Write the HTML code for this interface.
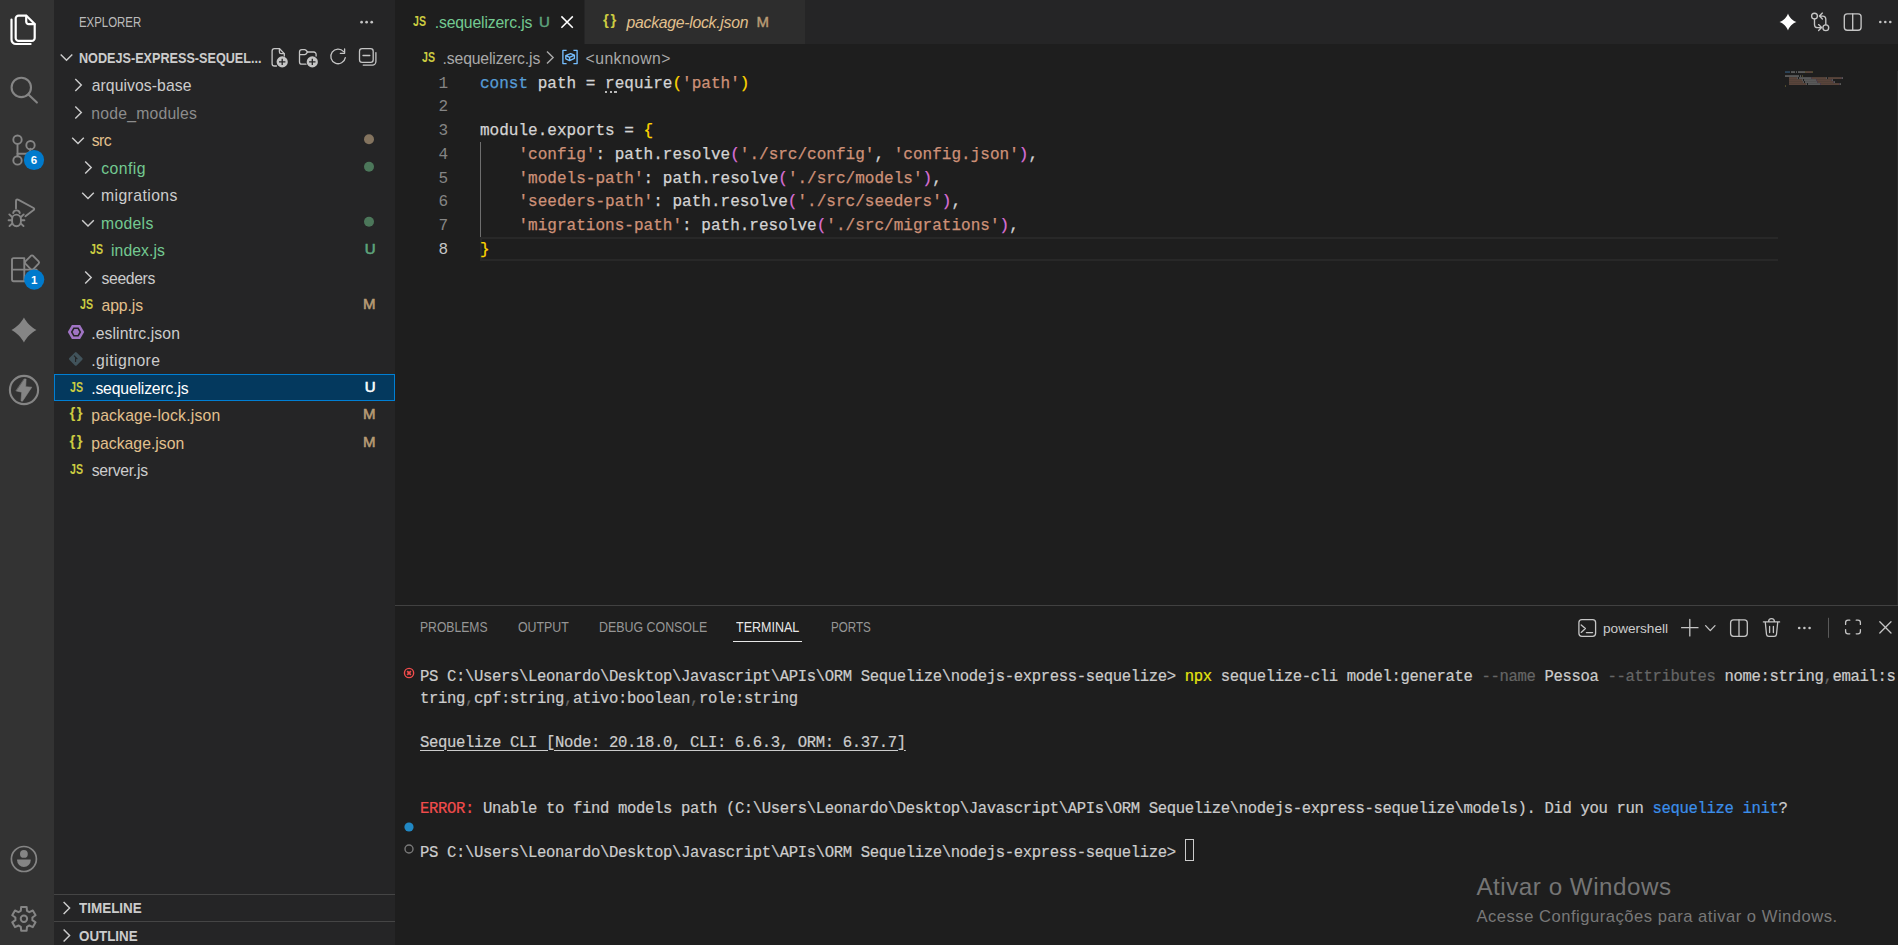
<!DOCTYPE html>
<html lang="pt-BR">
<head>
<meta charset="utf-8">
<title>.sequelizerc.js - nodejs-express-sequelize - Visual Studio Code</title>
<style>
*{box-sizing:border-box;margin:0;padding:0}
html,body{width:1898px;height:945px;overflow:hidden;background:#1e1e1e}
body{position:relative;font-family:"Liberation Sans",sans-serif;color:#cccccc;font-size:15.75px}
.abs{position:absolute}
.t{position:absolute;white-space:pre;line-height:1}
svg{position:absolute;overflow:visible}
/* regions */
#activity{left:0;top:0;width:54px;height:945px;background:#333333}
#sidebar{left:54px;top:0;width:341px;height:945px;background:#252526}
#tabs{left:395px;top:0;width:1503px;height:44px;background:#252526}
#editor{left:395px;top:44px;width:1503px;height:561px;background:#1e1e1e}
#panel{left:395px;top:605px;width:1503px;height:340px;background:#1e1e1e;border-top:1px solid #414141}
/* sidebar tree */
.row{position:absolute;left:54px;width:341px;height:27.5px}
.lbl{position:absolute;white-space:pre;line-height:1;font-size:15.75px}
.mono{font-family:"Liberation Mono",monospace}
.code{-webkit-text-stroke:0.25px currentColor;position:absolute;left:480px;white-space:pre;font-family:"Liberation Mono",monospace;font-size:16.04px;line-height:23.75px;height:23.75px;color:#d4d4d4}
.ln{position:absolute;left:395px;width:53px;text-align:right;font-family:"Liberation Mono",monospace;font-size:16.04px;line-height:23.75px;height:23.75px;color:#858585}
.term{-webkit-text-stroke:0.2px currentColor;position:absolute;left:420px;white-space:pre;font-family:"Liberation Mono",monospace;font-size:15px;line-height:22px;height:22px;color:#cccccc}
.k{color:#569cd6}.s{color:#ce9178}.b1{color:#ffd700}.b2{color:#da70d6}
</style>
</head>
<body>
<div id="activity" class="abs"></div>
<div id="sidebar" class="abs"></div>
<div id="tabs" class="abs"></div>
<div id="editor" class="abs"></div>
<div id="panel" class="abs"></div>
<!--ACTIVITY-->
<svg class="abs" style="left:0;top:0" width="54" height="945" viewBox="0 0 54 945" fill="none" stroke-linecap="round" stroke-linejoin="round">
<g stroke="#ffffff" stroke-width="2.2">
<path d="M18.6 15.7 H26.4 L34.7 24 V37.9 a2.9 2.9 0 0 1 -2.9 2.9 H18.6 a2.9 2.9 0 0 1 -2.9 -2.9 V18.6 a2.9 2.9 0 0 1 2.9 -2.9 Z"/>
<path d="M26.2 15.9 V21.6 a2.6 2.6 0 0 0 2.6 2.6 H34.5"/>
<path d="M11.5 19.6 V39.6 a4.4 4.4 0 0 0 4.4 4.4 H30.6"/>
</g>
<g stroke="#858585" stroke-width="2.1">
<circle cx="21.3" cy="87.4" r="9.7"/><path d="M28.4 94.5 L36.9 102.6"/>
</g>
<g stroke="#858585" stroke-width="1.9">
<circle cx="17.5" cy="139.7" r="4.2"/><circle cx="17.5" cy="160.4" r="4.2"/><circle cx="30.5" cy="145.2" r="4.2"/>
<path d="M17.5 144 V156.2"/><path d="M17.5 153.7 H25.5 a5 5 0 0 0 5 -5 V149.4"/>
</g>
<circle cx="34" cy="160" r="10.1" fill="#007acc" stroke="none"/>
<g stroke="#858585" stroke-width="1.9">
<path d="M16 208.5 V200.9 a1.4 1.4 0 0 1 2.1 -1.2 L33.6 208 a1.2 1.2 0 0 1 0 2.1 L25.4 216.2"/>
<path d="M12.1 219 a4.4 4.4 0 0 1 8.8 0 V221.8 a4.4 4.4 0 0 1 -8.8 0 Z"/>
<path d="M13.2 213 a3.4 3.4 0 0 1 6.6 0"/>
<path d="M12.1 217 L9.3 214.4 M12.1 220.3 H8.6 M12.4 223.4 L9.5 226 M20.9 217 L23.7 214.4 M20.9 220.3 H24.4 M20.6 223.4 L23.5 226"/>
</g>
<g stroke="#858585" stroke-width="1.9">
<path d="M12 259.7 a1.6 1.6 0 0 1 1.6 -1.6 H24.3 V281.2 H13.6 a1.6 1.6 0 0 1 -1.6 -1.6 Z M12 269.6 H36.6 V279.6 a1.6 1.6 0 0 1 -1.6 1.6 H24.3"/>
<path d="M32 255.4 a1.5 1.5 0 0 1 1.1 0.4 L38.6 261.4 a1.7 1.7 0 0 1 0 2.3 L33.1 269.3 a1.5 1.5 0 0 1 -2.2 0 L25.4 263.7 a1.7 1.7 0 0 1 0 -2.3 L30.9 255.8 a1.5 1.5 0 0 1 1.1 -0.4 Z"/>
</g>
<circle cx="34.2" cy="279.6" r="10.1" fill="#007acc" stroke="none"/>
<path d="M23.95 317.6 C26.15 322.20000000000005 31.85 327.90000000000003 36.45 330.1 C31.85 332.3 26.15 338.0 23.95 342.6 C21.75 338.0 16.049999999999997 332.3 11.45 330.1 C16.049999999999997 327.90000000000003 21.75 322.20000000000005 23.95 317.6 Z" fill="#858585" stroke="none"/>
<circle cx="24" cy="390" r="14.1" stroke="#858585" stroke-width="2.1"/>
<path d="M24.4 379 H26.1 L25.7 386.7 L31.8 387.2 L22.5 401.2 L21 400.9 L21.7 392.2 L16.3 390.9 Z" fill="#858585" stroke="#858585" stroke-width="0.6"/>
<circle cx="23.9" cy="859" r="12.5" stroke="#858585" stroke-width="1.7"/>
<circle cx="23.9" cy="853.9" r="3.9" fill="#858585" stroke="none"/>
<path d="M17.1 859.4 H30.7 V860.3 a6.8 6.8 0 0 1 -13.6 0 Z" fill="#858585" stroke="none"/>
<path d="M20.82 910.77 L21.16 906.91 L26.64 906.91 L26.98 910.77 L29.31 912.12 L32.82 910.48 L35.57 915.23 L32.39 917.45 L32.39 920.15 L35.57 922.37 L32.82 927.12 L29.31 925.48 L26.98 926.83 L26.64 930.69 L21.16 930.69 L20.82 926.83 L18.49 925.48 L14.98 927.12 L12.23 922.37 L15.41 920.15 L15.41 917.45 L12.23 915.23 L14.98 910.48 L18.49 912.12 Z" stroke="#858585" stroke-width="2"/>
<circle cx="23.9" cy="918.8" r="3.2" stroke="#858585" stroke-width="2"/>
</svg>
<div class="t" style="left:24px;top:155px;width:20px;text-align:center;font-size:11.5px;font-weight:bold;color:#fff">6</div>
<div class="t" style="left:24.2px;top:274.5px;width:20px;text-align:center;font-size:11.5px;font-weight:bold;color:#fff">1</div>
<!--/ACTIVITY-->
<!--SIDEBAR-->
<div class="t" id="sb_title" style="left:79.00px;top:16.03px;font-size:13.9px;color:#bbbbbb;transform:scaleX(0.8222);transform-origin:0 0;">EXPLORER</div>
<div class="t" id="sb_head" style="left:79.20px;top:50.78px;font-size:14.2px;color:#cccccc;transform:scaleX(0.8904);transform-origin:0 0;font-weight:bold;">NODEJS-EXPRESS-SEQUEL...</div>
<div class="abs" style="left:54px;top:374px;width:341px;height:27px;background:#04395e;border:1px solid #007fd4"></div>
<div class="t" id="lbl0" style="left:91.70px;top:78.17px;font-size:15.75px;color:#cccccc;letter-spacing:0.067px;">arquivos-base</div>
<div class="t" id="lbl1" style="left:91.30px;top:105.67px;font-size:15.75px;color:#8c8c8c;letter-spacing:0.209px;">node_modules</div>
<div class="t" id="lbl2" style="left:91.80px;top:133.17px;font-size:15.75px;color:#e2c08d;letter-spacing:-0.6px;">src</div>
<div class="t" id="lbl3" style="left:101.30px;top:160.67px;font-size:15.75px;color:#73c991;letter-spacing:0.42px;">config</div>
<div class="t" id="lbl4" style="left:101.00px;top:188.17px;font-size:15.75px;color:#cccccc;letter-spacing:0.411px;">migrations</div>
<div class="t" id="lbl5" style="left:101.00px;top:215.67px;font-size:15.75px;color:#73c991;letter-spacing:0.3px;">models</div>
<div class="t ic" style="left:89.8px;top:242.18px;font-size:14.2px;font-weight:bold;color:#cbcb41;transform:scaleX(.75);transform-origin:0 0">JS</div>
<div class="t" id="lbl6" style="left:111.00px;top:243.17px;font-size:15.75px;color:#73c991;letter-spacing:0.071px;">index.js</div>
<div class="t" style="left:345px;width:30.6px;text-align:right;top:241.30px;font-size:15px;color:#5fa57d;-webkit-text-stroke:0.6px #5fa57d">U</div>
<div class="t" id="lbl7" style="left:101.50px;top:270.67px;font-size:15.75px;color:#cccccc;letter-spacing:-0.367px;">seeders</div>
<div class="t ic" style="left:79.8px;top:297.18px;font-size:14.2px;font-weight:bold;color:#cbcb41;transform:scaleX(.75);transform-origin:0 0">JS</div>
<div class="t" id="lbl8" style="left:101.50px;top:298.17px;font-size:15.75px;color:#e2c08d;letter-spacing:-0.1px;">app.js</div>
<div class="t" style="left:345px;width:30.6px;text-align:right;top:296.30px;font-size:15px;color:#b89b74;-webkit-text-stroke:0.6px #b89b74">M</div>
<div class="t" id="lbl9" style="left:91.20px;top:325.67px;font-size:15.75px;color:#cccccc;letter-spacing:0.092px;">.eslintrc.json</div>
<div class="t" id="lbl10" style="left:91.20px;top:353.17px;font-size:15.75px;color:#cccccc;letter-spacing:0.456px;">.gitignore</div>
<div class="t ic" style="left:69.9px;top:379.68px;font-size:14.2px;font-weight:bold;color:#cbcb41;transform:scaleX(.75);transform-origin:0 0">JS</div>
<div class="t" id="lbl11" style="left:91.20px;top:380.67px;font-size:15.75px;color:#ffffff;letter-spacing:-0.164px;">.sequelizerc.js</div>
<div class="t" style="left:345px;width:30.6px;text-align:right;top:378.80px;font-size:15px;color:#ffffff;-webkit-text-stroke:0.6px #ffffff">U</div>
<div class="t ic" style="left:69.4px;top:405.10px;font-size:15px;font-weight:bold;color:#cbcb41;letter-spacing:1.6px">{}</div>
<div class="t" id="lbl12" style="left:91.20px;top:408.17px;font-size:15.75px;color:#e2c08d;letter-spacing:0.181px;">package-lock.json</div>
<div class="t" style="left:345px;width:30.6px;text-align:right;top:406.30px;font-size:15px;color:#b89b74;-webkit-text-stroke:0.6px #b89b74">M</div>
<div class="t ic" style="left:69.4px;top:432.60px;font-size:15px;font-weight:bold;color:#cbcb41;letter-spacing:1.6px">{}</div>
<div class="t" id="lbl13" style="left:91.20px;top:435.67px;font-size:15.75px;color:#e2c08d;letter-spacing:0.027px;">package.json</div>
<div class="t" style="left:345px;width:30.6px;text-align:right;top:433.80px;font-size:15px;color:#b89b74;-webkit-text-stroke:0.6px #b89b74">M</div>
<div class="t ic" style="left:69.9px;top:462.18px;font-size:14.2px;font-weight:bold;color:#cbcb41;transform:scaleX(.75);transform-origin:0 0">JS</div>
<div class="t" id="lbl14" style="left:91.70px;top:463.17px;font-size:15.75px;color:#cccccc;letter-spacing:-0.288px;">server.js</div>
<div class="abs" style="left:54px;top:894px;width:341px;height:1px;background:#454545"></div>
<div class="abs" style="left:54px;top:921px;width:341px;height:1px;background:#454545"></div>
<div class="t" id="sb_tl" style="left:79.00px;top:901.18px;font-size:14.2px;color:#cccccc;transform:scaleX(0.9485);transform-origin:0 0;font-weight:bold;">TIMELINE</div>
<div class="t" id="sb_ol" style="left:79.00px;top:928.98px;font-size:14.2px;color:#cccccc;transform:scaleX(0.9419);transform-origin:0 0;font-weight:bold;">OUTLINE</div>
<svg class="abs" style="left:0;top:0" width="400" height="945" viewBox="0 0 400 945">
<circle cx="361.6" cy="22.2" r="1.35" fill="#c5c5c5"/>
<circle cx="366.6" cy="22.2" r="1.35" fill="#c5c5c5"/>
<circle cx="371.7" cy="22.2" r="1.35" fill="#c5c5c5"/>
<path d="M60.70 54.50 L66.50 60.30 L72.30 54.50" stroke="#cccccc" stroke-width="1.45" fill="none"/>
<path d="M75.30 79.10 L81.30 85.10 L75.30 91.10" stroke="#cccccc" stroke-width="1.45" fill="none"/>
<path d="M75.30 106.60 L81.30 112.60 L75.30 118.60" stroke="#cccccc" stroke-width="1.45" fill="none"/>
<path d="M72.20 137.70 L78.00 143.50 L83.80 137.70" stroke="#cccccc" stroke-width="1.45" fill="none"/>
<circle cx="369" cy="139.20" r="5" fill="#84745f"/>
<path d="M85.20 161.60 L91.20 167.60 L85.20 173.60" stroke="#cccccc" stroke-width="1.45" fill="none"/>
<circle cx="369" cy="166.70" r="5" fill="#4c775a"/>
<path d="M82.20 192.70 L88.00 198.50 L93.80 192.70" stroke="#cccccc" stroke-width="1.45" fill="none"/>
<path d="M82.20 220.20 L88.00 226.00 L93.80 220.20" stroke="#cccccc" stroke-width="1.45" fill="none"/>
<circle cx="369" cy="221.70" r="5" fill="#4c775a"/>
<path d="M85.20 271.60 L91.20 277.60 L85.20 283.60" stroke="#cccccc" stroke-width="1.45" fill="none"/>
<polygon points="84.20,332.00 80.10,339.10 71.90,339.10 67.80,332.00 71.90,324.90 80.10,324.90" fill="#a074c4"/>
<polygon points="80.30,332.00 78.15,335.72 73.85,335.72 71.70,332.00 73.85,328.28 78.15,328.28" fill="#a074c4" stroke="#252526" stroke-width="1.5"/>
<rect x="70.60" y="353.70" width="10.4" height="10.4" rx="1.2" transform="rotate(45 75.80 358.90)" fill="#41535b"/>
<path d="M74.00 355.70 L77.40 359.10 M75.60 357.50 L75.60 362.10" stroke="#252526" stroke-width="1.1"/>
<g stroke="#c5c5c5" stroke-width="1.3" fill="none" stroke-linejoin="round" stroke-linecap="round">
<path d="M276.5 66 H274.4 a2.3 2.3 0 0 1 -2.3 -2.3 V51 a2.3 2.3 0 0 1 2.3 -2.3 H279.6 L284.3 53.6 V56"/>
<path d="M279.4 48.9 V52 a1.7 1.7 0 0 0 1.7 1.7 H284"/>
</g>
<circle cx="282.2" cy="61.9" r="5.6" fill="#c5c5c5"/>
<path d="M279 61.9 H285.4 M282.2 58.7 V65.1" stroke="#252526" stroke-width="1.3"/>
<g stroke="#c5c5c5" stroke-width="1.3" fill="none" stroke-linejoin="round" stroke-linecap="round">
<path d="M306 64.2 H301.8 a2.3 2.3 0 0 1 -2.3 -2.3 V51.9 a2.3 2.3 0 0 1 2.3 -2.3 H304.6 a2 2 0 0 1 1.4 .6 L307.6 52 H313.8 a2.3 2.3 0 0 1 2.3 2.3 V56"/>
<path d="M299.6 54.6 H304.6 a2 2 0 0 0 1.4 -.6 L307.6 52"/>
</g>
<circle cx="312.3" cy="61.9" r="5.6" fill="#c5c5c5"/>
<path d="M309.1 61.9 H315.5 M312.3 58.7 V65.1" stroke="#252526" stroke-width="1.3"/>
<path d="M343.6 51.6 A7.3 7.3 0 1 0 345.3 57.6" stroke="#c5c5c5" stroke-width="1.3" fill="none" stroke-linecap="round"/>
<path d="M344.6 49 V53.3 H340.3" stroke="#c5c5c5" stroke-width="1.3" fill="none" stroke-linecap="round" stroke-linejoin="round"/>
<g stroke="#c5c5c5" stroke-width="1.3" fill="none" stroke-linejoin="round" stroke-linecap="round">
<rect x="359.5" y="48.7" width="13.7" height="13.7" rx="2.6"/>
<path d="M363 55.5 H369.8"/>
<path d="M375.9 52.6 V61.6 a3.5 3.5 0 0 1 -3.5 3.5 H363.2"/>
</g>
<path d="M63.60 902.00 L69.60 908.00 L63.60 914.00" stroke="#cccccc" stroke-width="1.45" fill="none"/>
<path d="M63.60 929.60 L69.60 935.60 L63.60 941.60" stroke="#cccccc" stroke-width="1.45" fill="none"/>
</svg>
<!--/SIDEBAR-->
<!--TABS-->
<div class="abs" style="left:395px;top:0;width:189px;height:44px;background:#1e1e1e"></div>
<div class="abs" style="left:585px;top:0;width:220px;height:44px;background:#2d2d2d"></div>
<div class="t ic" style="left:412.6px;top:14.18px;font-size:14.2px;font-weight:bold;color:#cbcb41;transform:scaleX(.75);transform-origin:0 0">JS</div>
<div class="t" id="tab1" style="left:434.70px;top:15.37px;font-size:15.75px;color:#73c991;letter-spacing:-0.15px;">.sequelizerc.js</div>
<div class="t" id="tab1u" style="left:539.00px;top:13.70px;font-size:15px;color:#5fa57d;-webkit-text-stroke:0.45px #5fa57d;">U</div>
<div class="t ic" style="left:603.1px;top:12.40px;font-size:15px;font-weight:bold;color:#cbcb41;letter-spacing:1.6px">{}</div>
<div class="t" id="tab2" style="left:626.50px;top:15.37px;font-size:15.75px;color:#e2c08d;letter-spacing:-0.256px;font-style:italic;">package-lock.json</div>
<div class="t" id="tab2m" style="left:756.50px;top:13.70px;font-size:15px;color:#b89b74;-webkit-text-stroke:0.45px #b89b74;">M</div>
<div class="t ic" style="left:421.5px;top:50.48px;font-size:14.2px;font-weight:bold;color:#cbcb41;transform:scaleX(.75);transform-origin:0 0">JS</div>
<div class="t" id="bc1" style="left:442.60px;top:51.27px;font-size:15.75px;color:#a9a9a9;letter-spacing:-0.15px;">.sequelizerc.js</div>
<div class="t" id="bc2" style="left:585.60px;top:51.27px;font-size:15.75px;color:#a9a9a9;letter-spacing:0.425px;">&lt;unknown&gt;</div>
<svg class="abs" style="left:0;top:0" width="1898" height="72" viewBox="0 0 1898 72">
<path d="M561.4 16.4 L572.8 27.8 M572.8 16.4 L561.4 27.8" stroke="#ffffff" stroke-width="1.5" fill="none"/>
<path d="M547 51.6 L553.1 57.6 L547 63.6" stroke="#a9a9a9" stroke-width="1.45" fill="none"/>
<g stroke="#75beff" stroke-width="1.35" fill="none" stroke-linejoin="round">
<path d="M566.6 50.4 H562.9 V63.6 H566.6"/><path d="M573.4 50.4 H577.1 V63.6 H573.4"/>
<path d="M565.8 55.6 L570.6 53.6 L574.4 55.2 V58.4 L569.6 60.6 L565.8 58.8 Z M565.8 55.6 L569.6 57.4 L574.4 55.2 M569.6 57.4 V60.6"/>
</g>
<path d="M1788 13.5 C1789.2 17.3 1792.7 20.8 1796.5 22 C1792.7 23.2 1789.2 26.7 1788 30.5 C1786.8 26.7 1783.3 23.2 1779.5 22 C1783.3 20.8 1786.8 17.3 1788 13.5 Z" fill="#ffffff"/>
<g stroke="#c5c5c5" stroke-width="1.35" fill="none" stroke-linecap="round" stroke-linejoin="round">
<circle cx="1814.5" cy="16.1" r="2.9"/><circle cx="1825.8" cy="27.7" r="2.9"/>
<path d="M1814.5 19.2 V24.4 a3.2 3.2 0 0 0 3.2 3.2 H1821.4 M1818.6 24.6 L1821.6 27.6 L1818.6 30.6"/>
<path d="M1825.8 24.6 V19.3 a3.2 3.2 0 0 0 -3.2 -3.2 H1819.6 M1822.4 13.1 L1819.4 16.1 L1822.4 19.1"/>
<rect x="1844.3" y="13.8" width="16.8" height="16.4" rx="3"/><path d="M1852.7 13.8 V30.2"/>
</g>
<circle cx="1880.3" cy="22" r="1.3" fill="#c5c5c5"/>
<circle cx="1885.3" cy="22" r="1.3" fill="#c5c5c5"/>
<circle cx="1890.3" cy="22" r="1.3" fill="#c5c5c5"/>
</svg>
<!--/TABS-->
<!--EDITOR-->
<div class="abs" style="left:480px;top:237px;width:1298px;height:24px;border:2px solid #282828;border-right:none"></div>
<div class="abs" style="left:480px;top:141.7px;width:1.25px;height:95.3px;background:#6e6e6e"></div>
<div class="ln" style="top:72.70px">1</div>
<div class="code" style="top:72.70px"><span class="k">const</span> path = require<span class="b1">(</span><span class="s">'path'</span><span class="b1">)</span></div>
<div class="ln" style="top:96.45px">2</div>
<div class="ln" style="top:120.20px">3</div>
<div class="code" style="top:120.20px">module.exports = <span class="b1">{</span></div>
<div class="ln" style="top:143.95px">4</div>
<div class="code" style="top:143.95px">    <span class="s">'config'</span>: path.resolve<span class="b2">(</span><span class="s">'./src/config'</span>, <span class="s">'config.json'</span><span class="b2">)</span>,</div>
<div class="ln" style="top:167.70px">5</div>
<div class="code" style="top:167.70px">    <span class="s">'models-path'</span>: path.resolve<span class="b2">(</span><span class="s">'./src/models'</span><span class="b2">)</span>,</div>
<div class="ln" style="top:191.45px">6</div>
<div class="code" style="top:191.45px">    <span class="s">'seeders-path'</span>: path.resolve<span class="b2">(</span><span class="s">'./src/seeders'</span><span class="b2">)</span>,</div>
<div class="ln" style="top:215.20px">7</div>
<div class="code" style="top:215.20px">    <span class="s">'migrations-path'</span>: path.resolve<span class="b2">(</span><span class="s">'./src/migrations'</span><span class="b2">)</span>,</div>
<div class="ln" style="top:238.95px;color:#c6c6c6">8</div>
<div class="code" style="top:238.95px"><span class="b1">}</span></div>
<div class="abs" style="left:605.0px;top:91px;width:2.4px;height:2.4px;background:#b9b9b9"></div>
<div class="abs" style="left:609.6px;top:91px;width:2.4px;height:2.4px;background:#b9b9b9"></div>
<div class="abs" style="left:614.2px;top:91px;width:2.4px;height:2.4px;background:#b9b9b9"></div>
<!--/EDITOR-->
<!--MINIMAP-->
<svg class="abs" style="left:1780px;top:70px" width="118" height="536" viewBox="1780 70 118 536">
<rect x="1785.0" y="71.3" width="5" height="1.5" fill="#3f6f9a" opacity="0.6"/>
<rect x="1791.0" y="71.3" width="4" height="1.5" fill="#9a9a9a" opacity="0.6"/>
<rect x="1796.0" y="71.3" width="1" height="1.5" fill="#9a9a9a" opacity="0.6"/>
<rect x="1798.0" y="71.3" width="7" height="1.5" fill="#9a9a9a" opacity="0.6"/>
<rect x="1805.0" y="71.3" width="1" height="1.5" fill="#8a8040" opacity="0.6"/>
<rect x="1806.0" y="71.3" width="6" height="1.5" fill="#99705c" opacity="0.6"/>
<rect x="1812.0" y="71.3" width="1" height="1.5" fill="#8a8040" opacity="0.6"/>
<rect x="1785.0" y="75.3" width="14" height="1.5" fill="#9a9a9a" opacity="0.6"/>
<rect x="1800.0" y="75.3" width="1" height="1.5" fill="#9a9a9a" opacity="0.6"/>
<rect x="1802.0" y="75.3" width="1" height="1.5" fill="#8a8040" opacity="0.6"/>
<rect x="1789.0" y="77.3" width="8" height="1.5" fill="#99705c" opacity="0.6"/>
<rect x="1797.0" y="77.3" width="1" height="1.5" fill="#9a9a9a" opacity="0.6"/>
<rect x="1799.0" y="77.3" width="12" height="1.5" fill="#9a9a9a" opacity="0.6"/>
<rect x="1811.0" y="77.3" width="1" height="1.5" fill="#80607c" opacity="0.6"/>
<rect x="1812.0" y="77.3" width="14" height="1.5" fill="#99705c" opacity="0.6"/>
<rect x="1826.0" y="77.3" width="1" height="1.5" fill="#9a9a9a" opacity="0.6"/>
<rect x="1828.0" y="77.3" width="13" height="1.5" fill="#99705c" opacity="0.6"/>
<rect x="1841.0" y="77.3" width="1" height="1.5" fill="#80607c" opacity="0.6"/>
<rect x="1842.0" y="77.3" width="1" height="1.5" fill="#9a9a9a" opacity="0.6"/>
<rect x="1789.0" y="79.3" width="13" height="1.5" fill="#99705c" opacity="0.6"/>
<rect x="1802.0" y="79.3" width="1" height="1.5" fill="#9a9a9a" opacity="0.6"/>
<rect x="1804.0" y="79.3" width="12" height="1.5" fill="#9a9a9a" opacity="0.6"/>
<rect x="1816.0" y="79.3" width="1" height="1.5" fill="#80607c" opacity="0.6"/>
<rect x="1817.0" y="79.3" width="14" height="1.5" fill="#99705c" opacity="0.6"/>
<rect x="1831.0" y="79.3" width="1" height="1.5" fill="#80607c" opacity="0.6"/>
<rect x="1832.0" y="79.3" width="1" height="1.5" fill="#9a9a9a" opacity="0.6"/>
<rect x="1789.0" y="81.3" width="14" height="1.5" fill="#99705c" opacity="0.6"/>
<rect x="1803.0" y="81.3" width="1" height="1.5" fill="#9a9a9a" opacity="0.6"/>
<rect x="1805.0" y="81.3" width="12" height="1.5" fill="#9a9a9a" opacity="0.6"/>
<rect x="1817.0" y="81.3" width="1" height="1.5" fill="#80607c" opacity="0.6"/>
<rect x="1818.0" y="81.3" width="15" height="1.5" fill="#99705c" opacity="0.6"/>
<rect x="1833.0" y="81.3" width="1" height="1.5" fill="#80607c" opacity="0.6"/>
<rect x="1834.0" y="81.3" width="1" height="1.5" fill="#9a9a9a" opacity="0.6"/>
<rect x="1789.0" y="83.3" width="17" height="1.5" fill="#99705c" opacity="0.6"/>
<rect x="1806.0" y="83.3" width="1" height="1.5" fill="#9a9a9a" opacity="0.6"/>
<rect x="1808.0" y="83.3" width="12" height="1.5" fill="#9a9a9a" opacity="0.6"/>
<rect x="1820.0" y="83.3" width="1" height="1.5" fill="#80607c" opacity="0.6"/>
<rect x="1821.0" y="83.3" width="18" height="1.5" fill="#99705c" opacity="0.6"/>
<rect x="1839.0" y="83.3" width="1" height="1.5" fill="#80607c" opacity="0.6"/>
<rect x="1840.0" y="83.3" width="1" height="1.5" fill="#9a9a9a" opacity="0.6"/>
<rect x="1785.0" y="85.3" width="1" height="1.5" fill="#8a8040" opacity="0.6"/>
<rect x="1897" y="71" width="1" height="534" fill="#2a2a2a"/>
</svg>
<!--/MINIMAP-->
<!--PANEL-->
<div class="t" id="pt_prob" style="left:419.80px;top:620.36px;font-size:14.1px;color:#969696;transform:scaleX(0.8631);transform-origin:0 0;">PROBLEMS</div>
<div class="t" id="pt_out" style="left:517.50px;top:620.36px;font-size:14.1px;color:#969696;transform:scaleX(0.8779);transform-origin:0 0;">OUTPUT</div>
<div class="t" id="pt_dbg" style="left:598.60px;top:620.36px;font-size:14.1px;color:#969696;transform:scaleX(0.8799);transform-origin:0 0;">DEBUG CONSOLE</div>
<div class="t" id="pt_term" style="left:736.30px;top:620.36px;font-size:14.1px;color:#e7e7e7;transform:scaleX(0.8888);transform-origin:0 0;">TERMINAL</div>
<div class="t" id="pt_ports" style="left:830.60px;top:620.36px;font-size:14.1px;color:#969696;transform:scaleX(0.8238);transform-origin:0 0;">PORTS</div>
<div class="abs" style="left:733px;top:641px;width:69px;height:1px;background:#e7e7e7"></div>
<div class="term" style="top:665.54px;font-size:15.6px;letter-spacing:-0.3615px;">PS C:\Users\Leonardo\Desktop\Javascript\APIs\ORM Sequelize\nodejs-express-sequelize&gt; <span style="color:#e5e510">npx</span> sequelize-cli model:generate <span style="color:#666666">--name</span> Pessoa <span style="color:#666666">--attributes</span> nome:string<span style="color:#666666">,</span>email:s</div>
<div class="term" style="top:687.54px;font-size:15.6px;letter-spacing:-0.3615px;">tring<span style="color:#666666">,</span>cpf:string<span style="color:#666666">,</span>ativo:boolean<span style="color:#666666">,</span>role:string</div>
<div class="term" style="top:731.54px;font-size:15.6px;letter-spacing:-0.3615px;"><span style="text-decoration:underline;text-underline-offset:2.5px;text-decoration-thickness:1px">Sequelize CLI [Node: 20.18.0, CLI: 6.6.3, ORM: 6.37.7]</span></div>
<div class="term" style="top:797.54px;font-size:15.6px;letter-spacing:-0.3615px;"><span style="color:#f14c4c">ERROR:</span> Unable to find models path (C:\Users\Leonardo\Desktop\Javascript\APIs\ORM Sequelize\nodejs-express-sequelize\models). Did you run <span style="color:#3b8eea">sequelize init</span>?</div>
<div class="term" style="top:841.54px;font-size:15.6px;letter-spacing:-0.3615px;">PS C:\Users\Leonardo\Desktop\Javascript\APIs\ORM Sequelize\nodejs-express-sequelize&gt; </div>
<div class="abs" style="left:1185px;top:839px;width:9px;height:22px;border:1px solid #cccccc"></div>
<div class="t" id="pt_ps" style="left:1602.60px;top:621.69px;font-size:13.6px;color:#cccccc;transform:scaleX(1.0009);transform-origin:0 0;">powershell</div>
<div class="t" id="wm1" style="left:1476.40px;top:875.01px;font-size:24.2px;color:#757575;letter-spacing:0.527px;">Ativar o Windows</div>
<div class="t" id="wm2" style="left:1476.40px;top:908.55px;font-size:16.6px;color:#787878;letter-spacing:0.51px;">Acesse Configurações para ativar o Windows.</div>
<svg class="abs" style="left:0;top:600px" width="1898" height="345" viewBox="0 600 1898 345">
<circle cx="409.05" cy="673" r="4.6" stroke="#f14c4c" stroke-width="1.4" fill="none"/>
<path d="M407.2 671.15 L410.9 674.85 M410.9 671.15 L407.2 674.85" stroke="#f14c4c" stroke-width="1.7"/>
<circle cx="409" cy="827" r="4.6" fill="#2188c4"/>
<circle cx="409" cy="849" r="4" stroke="#7a7a7a" stroke-width="1.4" fill="none"/>
<g stroke="#c5c5c5" stroke-width="1.3" fill="none" stroke-linecap="round" stroke-linejoin="round">
<rect x="1578.9" y="619.6" width="16.7" height="16.7" rx="3"/>
<path d="M1581.2 625 L1585.4 628.6 L1581.2 632.4 M1586.4 632.6 H1592.6"/>
<path d="M1681.6 627.7 H1698 M1689.8 619.5 V635.9"/>
<path d="M1705.6 625.6 L1710.3 630.6 L1715 625.6"/>
<rect x="1730.6" y="619.8" width="16.7" height="16.5" rx="3"/><path d="M1739 619.8 V636.3"/>
<path d="M1763.4 621.9 H1779.6 M1768.6 621.6 a2.9 2.9 0 0 1 5.8 0 M1765.3 622.4 L1766.5 634.3 a2.3 2.3 0 0 0 2.3 2 H1774.2 a2.3 2.3 0 0 0 2.3 -2 L1777.7 622.4 M1769.6 626.4 V632.6 M1773.4 626.4 V632.6"/>
<path d="M1845.6 624.4 V622.6 a2.4 2.4 0 0 1 2.4 -2.4 H1849.8 M1856.2 620.2 H1858 a2.4 2.4 0 0 1 2.4 2.4 V624.4 M1860.4 629.6 V631.4 a2.4 2.4 0 0 1 -2.4 2.4 H1856.2 M1849.8 633.8 H1848 a2.4 2.4 0 0 1 -2.4 -2.4 V629.6"/>
<path d="M1879.8 621.8 L1891 633 M1891 621.8 L1879.8 633"/>
</g>
<circle cx="1799.2" cy="628" r="1.3" fill="#c5c5c5"/>
<circle cx="1804.4" cy="628" r="1.3" fill="#c5c5c5"/>
<circle cx="1809.6" cy="628" r="1.3" fill="#c5c5c5"/>
<path d="M1828.5 617.8 V637.8" stroke="#5a5a5a" stroke-width="1"/>
</svg>
<!--/PANEL-->
</body>
</html>
